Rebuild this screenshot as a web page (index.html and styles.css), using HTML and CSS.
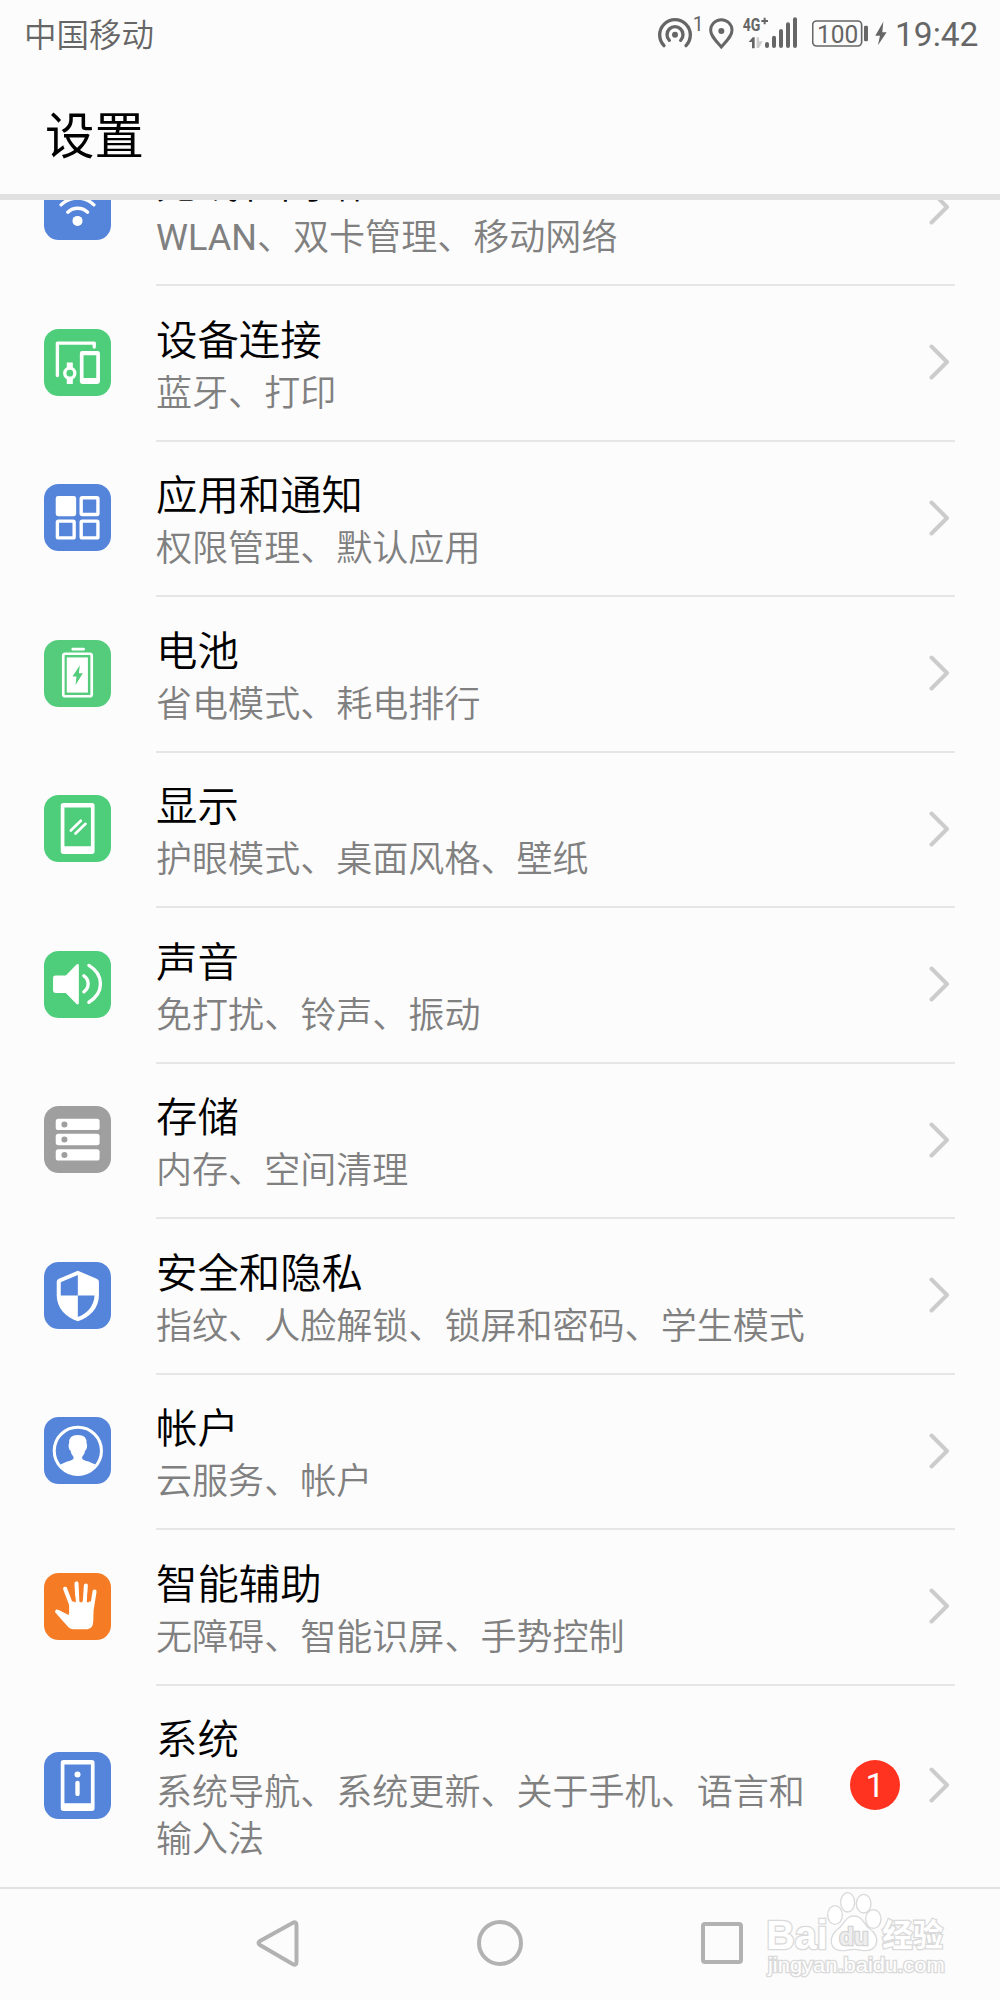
FILE: index.html
```html
<!doctype html>
<html lang="zh-CN">
<head>
  <meta charset="UTF-8">
  <meta name="viewport" content="width=device-width, initial-scale=1.0">
  <title>设置</title>
  <link rel="stylesheet" href="styles.css">
</head>
<body>
  <div class="statusbar">
    <span class="carrier">中国移动</span>
    <svg class="status-icons" viewBox="0 0 480 210">
      <!-- 热点 -->
      <g fill="none" stroke="#666" stroke-width="10" stroke-linecap="round">
        <path d="M72 137A46 46 0 1 1 138 137"/>
        <path d="M88 121A24 24 0 1 1 122 121"/>
      </g>
      <circle cx="105" cy="104" r="9" fill="#666"/>
      <text x="158" y="93" class="s-num">1</text>
      <!-- 定位 -->
      <path d="M244 141C228 122 212 108 212 91a32 32 0 0 1 64 0C276 108 260 122 244 141z" fill="none" stroke="#666" stroke-width="9"/>
      <circle cx="244" cy="93" r="9" fill="#666"/>
      <!-- 信号 -->
      <text x="308" y="93" class="s-net" textLength="53" lengthAdjust="spacingAndGlyphs">4G</text>
      <path d="M364 63h20M374 53v20" stroke="#666" stroke-width="6"/>
      <path d="M326 126l12-14h6v33h-8v-19z" fill="#666"/>
      <path d="M350 112h7v12h11l-11 20h-7z" fill="#ccc"/>
      <g stroke="#666" stroke-width="12" stroke-linecap="round">
        <path d="M381 132v6M402 113v25M423 93v45M444 73v65M465 58v80"/>
      </g>
    </svg>
    <svg class="battery" viewBox="0 0 235 210">
      <rect x="2" y="63" width="147" height="75" rx="12" fill="none" stroke="#666" stroke-width="5"/>
      <text x="15" y="129" class="b-num" textLength="124" lengthAdjust="spacingAndGlyphs">100</text>
      <rect x="156" y="77" width="12" height="47" rx="4" fill="#666"/>
      <path d="M214 65l-24 42h14l-6 29 26-39h-13z" fill="#666"/>
    </svg>
    <span class="clock">19:42</span>
  </div>

  <h1 class="title">设置</h1>

  <div class="list">
    <div class="row">
      <svg class="icon" viewBox="0 0 200 200">
        <rect width="200" height="200" rx="44" fill="#5585da"/>
        <g fill="none" stroke="#fff" stroke-width="10" stroke-linecap="round">
          <path d="M30 72a100 100 0 0 1 140 0M51 95a70 70 0 0 1 98 0M71 117a43 43 0 0 1 59 0"/>
        </g>
        <circle cx="100" cy="143" r="15" fill="#fff"/>
      </svg>
      <div class="body">
        <div class="text"><div class="name">无线和网络</div><div class="desc"><span class="latin">WLAN</span>、双卡管理、移动网络</div></div>
        <svg class="arrow" viewBox="0 0 20 36"><path d="M2.5 2.5L18 18 2.5 33.5"/></svg>
      </div>
    </div>

    <div class="row">
      <svg class="icon" viewBox="0 0 200 200">
        <rect width="200" height="200" rx="44" fill="#4ecd7a"/>
        <path d="M40 139V42h110v12" fill="none" stroke="#fff" stroke-width="10" stroke-linecap="round" stroke-linejoin="round"/>
        <path fill-rule="evenodd" fill="#fff" d="M114 66h46q7 0 7 7v84q0 7-7 7h-46q-7 0-7-7V73q0-7 7-7zm4 12v68h38V78z"/>
        <path fill="#fff" d="M68 100h18v16H68zM68 146h18v18H68z"/>
        <circle cx="77" cy="132" r="15" fill="none" stroke="#fff" stroke-width="10"/>
      </svg>
      <div class="body">
        <div class="text"><div class="name">设备连接</div><div class="desc">蓝牙、打印</div></div>
        <svg class="arrow" viewBox="0 0 20 36"><path d="M2.5 2.5L18 18 2.5 33.5"/></svg>
      </div>
    </div>

    <div class="row">
      <svg class="icon" viewBox="0 0 200 200">
        <rect width="200" height="200" rx="44" fill="#5585da"/>
        <rect x="35" y="36" width="61" height="60" rx="7" fill="#fff"/>
        <g fill="none" stroke="#fff" stroke-width="10">
          <rect x="111" y="41" width="50" height="50" rx="3"/>
          <rect x="40" y="111" width="50" height="50" rx="3"/>
          <rect x="111" y="111" width="50" height="50" rx="3"/>
        </g>
      </svg>
      <div class="body">
        <div class="text"><div class="name">应用和通知</div><div class="desc">权限管理、默认应用</div></div>
        <svg class="arrow" viewBox="0 0 20 36"><path d="M2.5 2.5L18 18 2.5 33.5"/></svg>
      </div>
    </div>

    <div class="row">
      <svg class="icon" viewBox="0 0 200 200">
        <rect width="200" height="200" rx="44" fill="#54cc7c"/>
        <rect x="82" y="23" width="40" height="8" rx="3" fill="#fff"/>
        <rect x="57.500" y="41" width="85" height="127" rx="6" fill="none" stroke="#fff" stroke-width="8"/>
        <rect x="68" y="52" width="63" height="105" fill="#fff"/>
        <path d="M107 75l-22 34h12l-3 25 22-35h-12z" fill="#54cc7c"/>
      </svg>
      <div class="body">
        <div class="text"><div class="name">电池</div><div class="desc">省电模式、耗电排行</div></div>
        <svg class="arrow" viewBox="0 0 20 36"><path d="M2.5 2.5L18 18 2.5 33.5"/></svg>
      </div>
    </div>

    <div class="row">
      <svg class="icon" viewBox="0 0 200 200">
        <rect width="200" height="200" rx="44" fill="#4ecd7a"/>
        <path fill-rule="evenodd" fill="#fff" d="M58 24h85q8 0 8 8v136q0 8-8 8H58q-8 0-8-8V32q0-8 8-8zm3 13v116h79V37z"/>
        <path d="M80 106l30-29M94 115l30-29" stroke="#fff" stroke-width="8" stroke-linecap="round"/>
      </svg>
      <div class="body">
        <div class="text"><div class="name">显示</div><div class="desc">护眼模式、桌面风格、壁纸</div></div>
        <svg class="arrow" viewBox="0 0 20 36"><path d="M2.5 2.5L18 18 2.5 33.5"/></svg>
      </div>
    </div>

    <div class="row">
      <svg class="icon" viewBox="0 0 200 200">
        <rect width="200" height="200" rx="44" fill="#4ecd7a"/>
        <path d="M34 73h31l32-33q7-4 7 3v112q0 7-7 3l-32-33H34q-7 0-7-7V80q0-7 7-7z" fill="#fff"/>
        <path d="M119 74a29 29 0 0 1 0 48M134 43c46 28 46 82 0 110" fill="none" stroke="#fff" stroke-width="10" stroke-linecap="round"/>
      </svg>
      <div class="body">
        <div class="text"><div class="name">声音</div><div class="desc">免打扰、铃声、振动</div></div>
        <svg class="arrow" viewBox="0 0 20 36"><path d="M2.5 2.5L18 18 2.5 33.5"/></svg>
      </div>
    </div>

    <div class="row">
      <svg class="icon" viewBox="0 0 200 200">
        <rect width="200" height="200" rx="44" fill="#9f9f9f"/>
        <g fill="#fff">
          <rect x="35" y="38" width="131" height="34" rx="8"/>
          <rect x="35" y="83" width="131" height="34" rx="8"/>
          <rect x="35" y="129" width="131" height="34" rx="8"/>
        </g>
        <g fill="#9f9f9f">
          <circle cx="61" cy="55" r="9"/><circle cx="61" cy="100" r="9"/><circle cx="61" cy="146" r="9"/>
        </g>
      </svg>
      <div class="body">
        <div class="text"><div class="name">存储</div><div class="desc">内存、空间清理</div></div>
        <svg class="arrow" viewBox="0 0 20 36"><path d="M2.5 2.5L18 18 2.5 33.5"/></svg>
      </div>
    </div>

    <div class="row">
      <svg class="icon" viewBox="0 0 200 200">
        <rect width="200" height="200" rx="44" fill="#5585da"/>
        <path d="M101 26l58 25q5 3 5 8v40c0 37-26 66-63 78C64 165 38 136 38 99V59q0-5 5-8z" fill="#fff"/>
        <path d="M101 39v61H50V63q0-3 3-4zM101 100h50c-2 30-20 54-50 64z" fill="#5585da"/>
      </svg>
      <div class="body">
        <div class="text"><div class="name">安全和隐私</div><div class="desc">指纹、人脸解锁、锁屏和密码、学生模式</div></div>
        <svg class="arrow" viewBox="0 0 20 36"><path d="M2.5 2.5L18 18 2.5 33.5"/></svg>
      </div>
    </div>

    <div class="row">
      <svg class="icon" viewBox="0 0 200 200">
        <rect width="200" height="200" rx="44" fill="#5585da"/>
        <circle cx="101" cy="101" r="70.500" fill="none" stroke="#fff" stroke-width="9"/>
        <path d="M75 79q-2-25 26-25t26 25q3 2 1 12-1 7-5 9-2 12-9 19v6q4 3 19 8l20 9q-17 32-52 32t-52-32l20-9q15-5 19-8v-6q-7-7-9-19-4-2-5-9-2-10 1-12z" fill="#fff"/>
      </svg>
      <div class="body">
        <div class="text"><div class="name">帐户</div><div class="desc">云服务、帐户</div></div>
        <svg class="arrow" viewBox="0 0 20 36"><path d="M2.5 2.5L18 18 2.5 33.5"/></svg>
      </div>
    </div>

    <div class="row">
      <svg class="icon" viewBox="0 0 200 200">
        <rect width="200" height="200" rx="44" fill="#f57b24"/>
        <g stroke="#fff" stroke-width="12" stroke-linecap="round">
          <path d="M63 47l19 50M97 31l3 60M125 37l-4 60M151 55l-8 50"/>
          <path d="M39 115l36 18"/>
        </g>
        <path d="M75 85h74l-2 60q-1 22-18 23H87q-8 0-14-6l-36-40 8-11 28 16 2-8z" fill="#fff"/>
        <path d="M87 60l4 27h4l-3-27zM107 60v27h6l3-27zM130 60l-2 27h6l5-27z" fill="#f57b24"/>
      </svg>
      <div class="body">
        <div class="text"><div class="name">智能辅助</div><div class="desc">无障碍、智能识屏、手势控制</div></div>
        <svg class="arrow" viewBox="0 0 20 36"><path d="M2.5 2.5L18 18 2.5 33.5"/></svg>
      </div>
    </div>

    <div class="row last">
      <svg class="icon" viewBox="0 0 200 200">
        <rect width="200" height="200" rx="44" fill="#5585da"/>
        <path fill-rule="evenodd" fill="#fff" d="M58 24h85q8 0 8 8v136q0 8-8 8H58q-8 0-8-8V32q0-8 8-8zm3 13v116h79V37z"/>
        <circle cx="100" cy="67" r="9" fill="#fff"/>
        <path d="M100 92v33" stroke="#fff" stroke-width="13" stroke-linecap="round"/>
      </svg>
      <div class="body">
        <div class="text"><div class="name">系统</div><div class="desc">系统导航、系统更新、关于手机、语言和输入法</div></div>
        <span class="badge">1</span>
        <svg class="arrow" viewBox="0 0 20 36"><path d="M2.5 2.5L18 18 2.5 33.5"/></svg>
      </div>
    </div>
  </div>

  <div class="navbar">
    <svg viewBox="0 0 48 48"><path d="M42.500 6q0-4-4-2L6 22q-3 2 0 4l32.500 19q4 2 4-2z" /></svg>
    <svg viewBox="0 0 48 48"><circle cx="24" cy="24" r="21"/></svg>
    <svg viewBox="0 0 48 48"><rect x="5" y="5" width="38" height="38" rx="2"/></svg>
  </div>

  <svg class="watermark" viewBox="0 0 570 285">
    <g class="wm-shape">
      <ellipse cx="225" cy="90" rx="20" ry="26"/>
      <ellipse cx="263" cy="52" rx="19" ry="27"/>
      <ellipse cx="311" cy="56" rx="20" ry="26"/>
      <ellipse cx="340" cy="102" rx="21" ry="26"/>
      <path d="M282 95c-25 0-28 25-46 38-32 24-24 64 10 62 14 0 22-4 36-4s22 4 36 4c34 0 42-38 10-62-18-13-21-38-46-38z"/>
    </g>
    <text x="19" y="191" class="wm-bai" textLength="184" lengthAdjust="spacingAndGlyphs">Bai</text>
    <text x="238" y="179" class="wm-du" textLength="88" lengthAdjust="spacingAndGlyphs">du</text>
    <text x="367" y="184" class="wm-cn" textLength="182" lengthAdjust="spacingAndGlyphs">经验</text>
    <text x="24" y="262" class="wm-url" textLength="530" lengthAdjust="spacingAndGlyphs">jingyan.baidu.com</text>
  </svg>
</body>
</html>
```
FILE: styles.css
```css
* {
  box-sizing: border-box;
}
body {
  margin: 0;
  width: 1000px;
  height: 2000px;
  display: flex;
  flex-direction: column;
  overflow: hidden;
  position: relative;
  background: #fcfcfc;
  font-family: Roboto, "Noto Sans CJK SC", sans-serif;
  color: #000;
}
.statusbar {
  height: 70px;
  flex: none;
  display: flex;
  align-items: center;
  padding: 0 22px 0 24px;
  color: #666;
}
.carrier {
  font-size: 32.5px;
  font-weight: 350;
  margin-right: auto;
  padding-bottom: 5px;
}
.status-icons {
  width: 160px;
  height: 70px;
}
.battery {
  width: 78.3px;
  height: 70px;
  margin-left: 12px;
}
.clock {
  width: 83px;
  margin-left: 5px;
  padding-bottom: 1px;
  font-size: 33.5px;
  text-align: right;
}
.s-num {
  font-size: 58px;
  fill: #666;
}
.s-net {
  font-size: 55px;
  font-weight: bold;
  fill: #666;
}
.b-num {
  font-size: 76px;
  fill: #666;
}
.title {
  flex: none;
  height: 130px;
  margin: 0;
  padding-left: 45px;
  font-size: 49.5px;
  font-weight: 400;
  line-height: 135px;
  border-bottom: 6px solid #e1e1e1;
}
.list {
  height: 1687px;
  flex: none;
  overflow: hidden;
}
.row {
  display: flex;
  align-items: center;
  height: 155.5px;
  padding: 0 45px 0 44px;
}
.row:first-child {
  margin-top: -69.5px;
}
.row:first-child .text {
  padding-top: 25.5px;
}
.row:first-child .desc {
  margin-top: 3px;
}
.row.last {
  height: 203px;
}
.icon {
  flex: none;
  width: 67px;
  height: 67px;
  margin-right: 45px;
  margin-bottom: 3px;
}
.body {
  flex: 1;
  height: 100%;
  display: flex;
  align-items: center;
  padding-right: 6px;
  border-bottom: 2px solid #e6e6e6;
}
.last .body {
  border-bottom: 0;
  padding-bottom: 4px;
}
.text {
  flex: 1;
  align-self: flex-start;
  padding-top: 26.5px;
}
.name {
  font-size: 41.4px;
  font-weight: 350;
  line-height: 56px;
}
.desc {
  font-size: 36.05px;
  font-weight: 350;
  line-height: 47px;
  margin-top: 2px;
  max-width: 655px;
  color: #808080;
}
.latin {
  font-weight: 400;
}
.arrow {
  width: 20px;
  height: 36px;
  margin-bottom: 1px;
  fill: none;
  stroke: #ccc;
  stroke-width: 4;
  stroke-linecap: round;
  stroke-linejoin: round;
}
.badge {
  width: 50px;
  height: 50px;
  margin-right: 29px;
  border-radius: 50%;
  background: #ff3320;
  color: #fff;
  font-size: 34px;
  line-height: 51px;
  text-align: center;
}
.navbar {
  flex: 1;
  display: flex;
  justify-content: center;
  align-items: center;
  gap: 174px;
  padding-bottom: 3px;
  border-top: 2px solid #e2e2e2;
}
.navbar svg {
  width: 48px;
  height: 48px;
  fill: none;
  stroke: #b2b2b2;
  stroke-width: 4;
}
.watermark {
  position: absolute;
  left: 760px;
  top: 1885px;
  width: 190px;
  height: 95px;
  fill: #fff;
  stroke: #dadada;
  stroke-width: 8;
  paint-order: stroke;
}
.wm-bai {
  font: bold 122px "Liberation Sans", sans-serif;
}
.wm-du {
  font: bold 72px "Liberation Sans", sans-serif;
  fill: #eee;
  stroke: #d4d4d4;
}
.wm-cn {
  font: bold 92px "Noto Sans CJK SC", sans-serif;
}
.wm-url {
  font: 62px "Liberation Sans", sans-serif;
}
```
